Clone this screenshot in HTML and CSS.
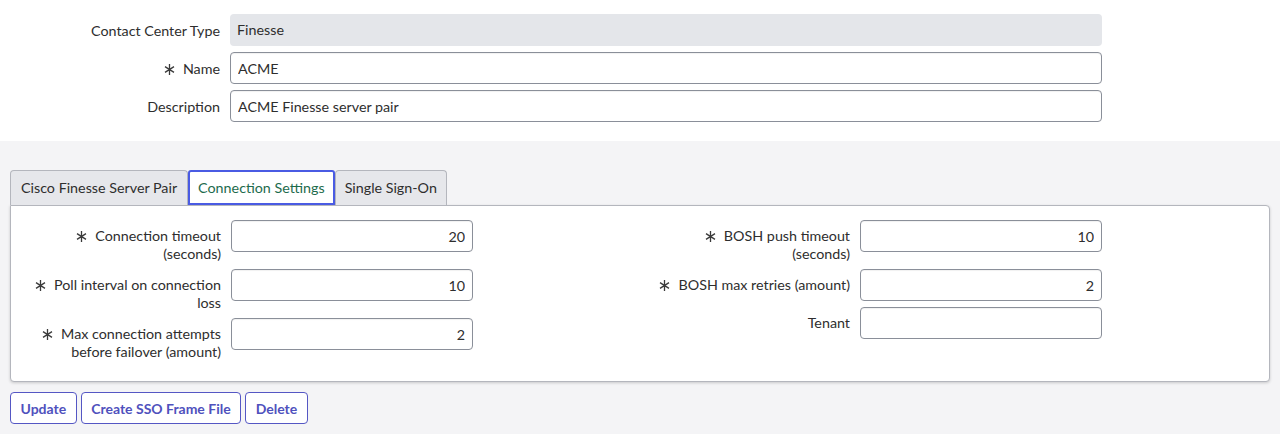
FILE: index.html
```html
<!DOCTYPE html>
<html lang="en">
<head>
    <meta charset="UTF-8">
    <meta name="viewport" content="width=device-width, initial-scale=1.0">
    <title>Contact Center</title>
    <link rel="stylesheet" href="styles.css">
</head>
<body>

    <!-- Header record fields -->
    <div class="record">
        <div class="field-row">
            <label class="field-label">Contact Center Type</label>
            <div class="field-readonly">Finesse</div>
        </div>
        <div class="field-row">
            <label class="field-label"><svg class="req" viewBox="0 0 11 11"><path d="M5.5 0V11M1 2.6L10 8.4M1 8.4L10 2.6"/></svg>Name</label>
            <input class="field-input" type="text" value="ACME">
        </div>
        <div class="field-row">
            <label class="field-label">Description</label>
            <input class="field-input" type="text" value="ACME Finesse server pair">
        </div>
    </div>

    <!-- Tabbed sections -->
    <div class="sections">
        <div class="tabs">
            <div class="tab">Cisco Finesse Server Pair</div>
            <div class="tab active">Connection Settings</div>
            <div class="tab">Single Sign-On</div>
        </div>

        <div class="tab-panel">
            <div class="col">
                <label class="col-label"><svg class="req" viewBox="0 0 11 11"><path d="M5.5 0V11M1 2.6L10 8.4M1 8.4L10 2.6"/></svg>Connection timeout (seconds)</label>
                <input class="col-input" type="text" value="20">

                <label class="col-label"><svg class="req" viewBox="0 0 11 11"><path d="M5.5 0V11M1 2.6L10 8.4M1 8.4L10 2.6"/></svg>Poll interval on connection loss</label>
                <input class="col-input" type="text" value="10">

                <label class="col-label"><svg class="req" viewBox="0 0 11 11"><path d="M5.5 0V11M1 2.6L10 8.4M1 8.4L10 2.6"/></svg>Max connection attempts before failover (amount)</label>
                <input class="col-input" type="text" value="2">
            </div>
            <div class="col">
                <label class="col-label"><svg class="req" viewBox="0 0 11 11"><path d="M5.5 0V11M1 2.6L10 8.4M1 8.4L10 2.6"/></svg>BOSH push timeout (seconds)</label>
                <input class="col-input" type="text" value="10">

                <label class="col-label"><svg class="req" viewBox="0 0 11 11"><path d="M5.5 0V11M1 2.6L10 8.4M1 8.4L10 2.6"/></svg>BOSH max retries (amount)</label>
                <input class="col-input" type="text" value="2">

                <label class="col-label">Tenant</label>
                <input class="col-input" type="text" value="">
            </div>
        </div>

        <div class="actions">
            <button type="button">Update</button>
            <button type="button">Create SSO Frame File</button>
            <button type="button">Delete</button>
        </div>
    </div>

</body>
</html>
```

FILE: styles.css
```css
body {
    font-family: 'Lato', 'Liberation Sans', sans-serif;
    font-size: 14.3px;
    color: #2e2e2e;
    background-color: #f4f4f6;
    margin: 0;
    padding: 0;
}

.record {
    background-color: #ffffff;
    padding: 14px 0 19px 0;
}

.field-row {
    display: flex;
    align-items: center;
    margin-bottom: 6px;
}

.field-row:last-child {
    margin-bottom: 0;
}

.field-label {
    width: 230px;
    text-align: right;
    padding-right: 10px;
    box-sizing: border-box;
}

.field-readonly,
.field-input {
    width: 872px;
    height: 32px;
    box-sizing: border-box;
    padding: 0 7px;
    font-family: inherit;
    font-size: 14.3px;
    color: #2e2e2e;
    border-radius: 4px;
}

.field-readonly {
    background-color: #e4e6ea;
    line-height: 32px;
}

.field-input {
    border: 1px solid #8a8f99;
    background-color: #ffffff;
    box-shadow: inset 0 1px 1px rgba(0, 0, 0, 0.06);
}

.req {
    width: 11px;
    height: 11px;
    margin-right: 8px;
    vertical-align: -1px;
    stroke: #3a3a3a;
    stroke-width: 1.3;
    fill: none;
}

.sections {
    padding: 29px 10px 11px 10px;
}

.tabs {
    display: flex;
    height: 35px;
}

.tab {
    height: 35px;
    box-sizing: border-box;
    padding: 0 10px;
    line-height: 33px;
    background-color: #e6e7eb;
    border: 1px solid #b4b6bd;
    border-bottom: none;
    border-radius: 4px 4px 0 0;
    color: #2e2e2e;
}

.tab:last-child {
    padding: 0 9px;
}

.tab.active {
    background-color: #ffffff;
    color: #1d6b4d;
    border: 2px solid #4a5be3;
    line-height: 31px;
    padding: 0 8px;
    border-radius: 3px 3px 0 0;
}

.tab-panel {
    display: grid;
    grid-template-columns: 629px 1fr;
    background-color: #ffffff;
    border: 1px solid #b4b6bd;
    border-radius: 0 4px 4px 4px;
    box-shadow: 0 1px 3px rgba(0, 0, 0, 0.18);
    padding: 14px 0 20px 0;
}

.col {
    display: grid;
    grid-template-columns: 210px 242px;
    column-gap: 10px;
    row-gap: 6px;
    align-items: start;
    align-content: start;
}

.col-label {
    text-align: right;
    line-height: 18px;
    padding-top: 7px;
    padding-left: 12px;
}

.col-input {
    height: 32px;
    box-sizing: border-box;
    padding: 0 7px;
    text-align: right;
    font-family: inherit;
    font-size: 14.3px;
    color: #2e2e2e;
    border: 1px solid #8a8f99;
    border-radius: 4px;
    background-color: #ffffff;
    box-shadow: inset 0 1px 1px rgba(0, 0, 0, 0.06);
}

.actions {
    display: flex;
    gap: 4px;
    margin-top: 10px;
}

button {
    height: 32px;
    padding: 0 9.5px;
    font-family: inherit;
    font-size: 14px;
    font-weight: bold;
    color: #4f51bd;
    background-color: #ffffff;
    border: 1px solid #5557c4;
    border-radius: 4px;
    cursor: pointer;
}

button:hover {
    background-color: #f0f0fb;
}
```
